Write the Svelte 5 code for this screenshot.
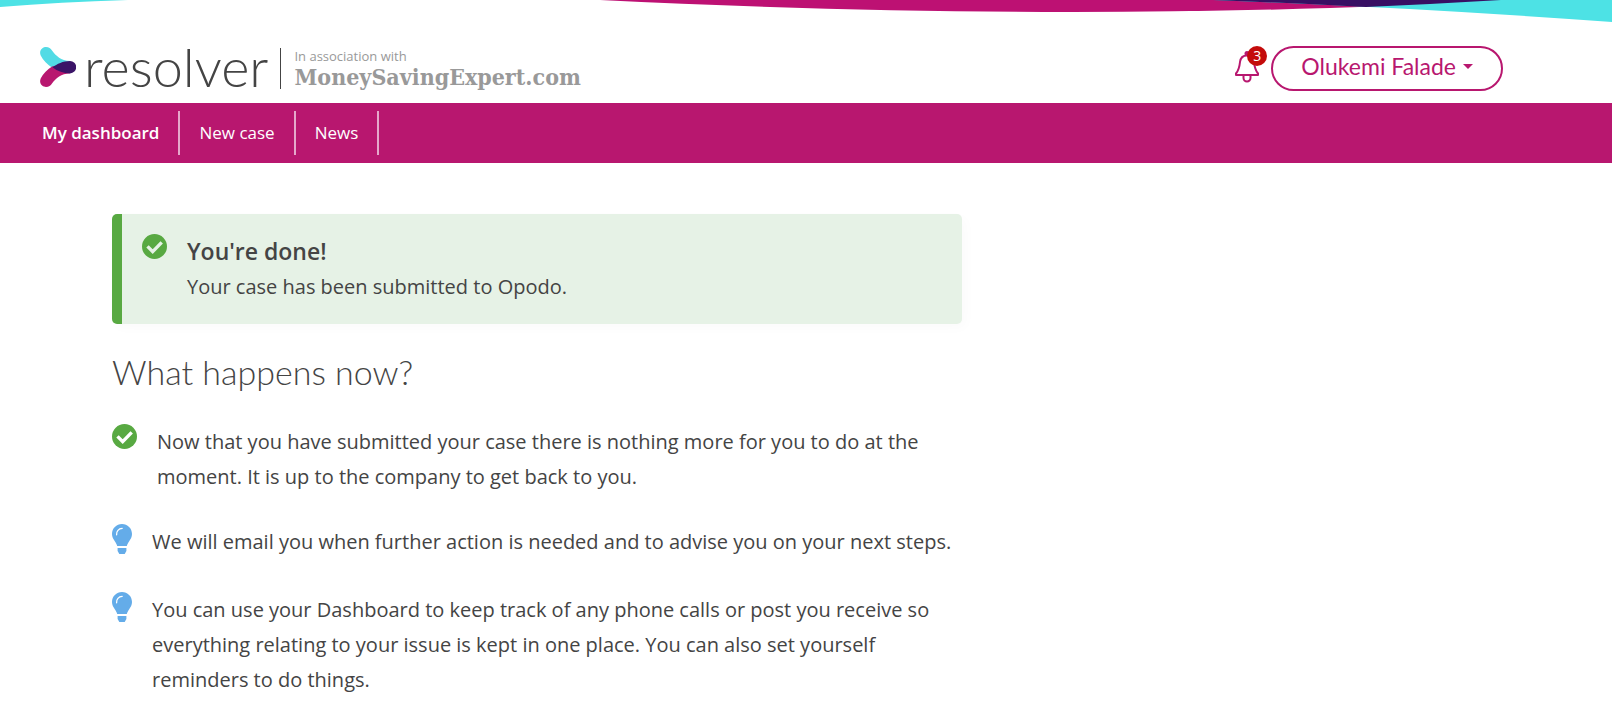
<script lang="ts">
  const links = [
    { label: "My dashboard", href: "#dashboard", active: true },
    { label: "New case", href: "#new-case", active: false },
    { label: "News", href: "#news", active: false },
  ];

  const steps = [
    {
      icon: "check",
      text: "Now that you have submitted your case there is nothing more for you to do at the moment. It is up to the company to get back to you.",
    },
    {
      icon: "bulb",
      text: "We will email you when further action is needed and to advise you on your next steps.",
    },
    {
      icon: "bulb",
      text: "You can use your Dashboard to keep track of any phone calls or post you receive so everything relating to your issue is kept in one place. You can also set yourself reminders to do things.",
    },
  ];

  let user = "Olukemi Falade";
  let notifications = 3;
</script>

{#snippet check()}
  <svg class="check" viewBox="0 0 25 25" aria-hidden="true">
    <circle cx="12.5" cy="12.5" r="12.5" fill="#58a942" />
    <path d="M5.5 12.4l5.2 5.2 9-9.2" fill="none" stroke="currentColor" stroke-width="3.4" />
  </svg>
{/snippet}

{#snippet bulb()}
  <svg class="bulb" viewBox="0 0 20 30" aria-hidden="true">
    <path
      d="M10 0C4.4 0 0 4.4 0 10c0 3 1.3 5 2.8 7.2C4 19 4.7 20.2 5.2 22h9.6c.5-1.8 1.2-3 2.4-4.8C18.7 15 20 13 20 10 20 4.4 15.6 0 10 0z"
      fill="#64ace9"
    />
    <path d="M5.6 24h8.8v3L12.7 30H7.3l-1.7-3z" fill="#64ace9" />
    <path
      d="M4.6 10.8C4.3 7.2 6.6 4.6 10.2 4.4"
      fill="none"
      stroke="#fff"
      stroke-width="1.3"
      stroke-linecap="round"
    />
  </svg>
{/snippet}

<div class="page">
  <svg class="swoosh" viewBox="0 0 1612 24" preserveAspectRatio="none" aria-hidden="true">
    <path d="M0 0H128Q60 2 0 7z" fill="#4de2e5" />
    <path d="M600 0C760 8 920 12 1072 12S1370 8 1501 0z" fill="#bd1173" />
    <path d="M1213 0H1612V22Q1420 8 1213 0z" fill="#4de2e5" />
    <path d="M1213 0H1501Q1435 4 1366 7Q1290 3 1213 0z" fill="#380f63" />
  </svg>

  <header>
    <a class="brand" href="#home">
      <svg class="mark" viewBox="0 0 36 40" aria-hidden="true">
        <path d="M.7 8.500C-1.500 3 3 0 6 0c3 0 4.500 1.500 6 3.500C16 9 21 13.500 30 14v6.500L12.500 21C7.500 17.500 3 13.500.7 8.500z" fill="#52dbe5" />
        <path d="M.7 31.500C-1.500 37 3 40 6 40c3 0 4.500-1.500 6-3.500 4-5.500 9-9.500 18-10.200V20l-17.500-.7C7.500 22.500 3 26.500.7 31.500z" fill="#b8176f" />
        <path d="M12.500 20.300C17 17 23 14 30 14a6.200 6.200 0 0 1 0 12.400c-6.500 0-12.500-2-17.500-6.100z" fill="#3b1467" />
      </svg>
      <span class="name">resolver</span>
    </a>
    <div class="partner">
      <span class="assoc">In association with</span>
      <span class="mse">MoneySavingExpert.com</span>
    </div>

    <div class="account">
      <button class="bell" aria-label="Notifications">
        <svg viewBox="0 0 24 32" aria-hidden="true">
          <g fill="none" stroke="#b8176f" stroke-width="2">
            <path d="M12 4.500C7.500 4.500 5.500 7 5 11c-.5 5-1.500 8.500-4 11.500V24h22v-1.500c-2.500-3-3.500-6.500-4-11.500-.5-4-2.500-6.500-7-6.500z" stroke-linejoin="round" />
            <path d="M8.500 24v3a3.500 3.500 0 0 0 7 0v-3" />
          </g>
          <circle cx="12" cy="2.500" r="2.500" fill="#b8176f" />
        </svg>
        <span class="badge">{notifications}</span>
      </button>
      <button class="user">{user}<span class="caret"></span></button>
    </div>
  </header>

  <nav>
    {#each links as link}
      <a href={link.href} class:active={link.active}>{link.label}</a>
    {/each}
  </nav>

  <main>
    <section class="alert">
      {@render check()}
      <div>
        <strong>You're done!</strong>
        <p>Your case has been submitted to Opodo.</p>
      </div>
    </section>

    <h1>What happens now?</h1>

    <ul>
      {#each steps as step}
        <li>
          {#if step.icon === "check"}
            {@render check()}
          {:else}
            {@render bulb()}
          {/if}
          <p>{step.text}</p>
        </li>
      {/each}
    </ul>
  </main>
</div>

<style>
  :global(body) {
    background: #fff;
  }

  .page {
    --magenta: #b8176f;
    --text: #444;

    position: relative;
    color: var(--text);
    font-family: "Open Sans", "Noto Sans", sans-serif;
    font-size: 20px;
    line-height: 35px;
  }

  p,
  h1,
  ul {
    margin: 0;
    padding: 0;
  }

  a {
    color: inherit;
    text-decoration: none;
  }

  button {
    background: none;
    border: none;
    padding: 0;
    cursor: pointer;
  }

  .swoosh {
    position: absolute;
    top: 0;
    left: 0;
    width: 100%;
    height: 24px;
  }

  header {
    display: flex;
    align-items: center;
    box-sizing: border-box;
    min-height: 103px;
    padding: 34px 109px 0 40px;
  }

  .brand {
    display: flex;
    align-items: center;
    gap: 8px;
    margin-bottom: 4px;
  }

  .mark {
    width: 36px;
    height: 40px;
  }

  .name {
    font-family: Lato, sans-serif;
    font-size: 54px;
    font-weight: 300;
    line-height: 40px;
  }

  .partner {
    display: flex;
    flex-direction: column;
    margin-left: 12px;
    padding-left: 13px;
    border-left: 1px solid var(--text);
    color: #999;
  }

  .assoc {
    font-size: 13px;
    line-height: 16px;
  }

  .mse {
    font-family: "DejaVu Serif Condensed", "DejaVu Serif", serif;
    font-size: 23px;
    font-weight: 700;
    line-height: 25px;
  }

  .account {
    display: flex;
    align-items: center;
    gap: 12px;
    margin-left: auto;
  }

  .bell {
    position: relative;
    width: 24px;
    height: 32px;
    margin-bottom: 4px;
  }

  .bell svg {
    display: block;
    width: 24px;
    height: 32px;
  }

  .badge {
    position: absolute;
    top: -5px;
    left: 12px;
    width: 20px;
    border-radius: 50%;
    background: #c40b0b;
    color: #fff;
    font-family: "Open Sans", sans-serif;
    font-size: 14px;
    line-height: 20px;
    text-align: center;
  }

  .user {
    display: flex;
    align-items: center;
    gap: 7px;
    padding: 0 28px 4px;
    border: 2px solid var(--magenta);
    border-radius: 23px;
    color: var(--magenta);
    font-family: Lato, sans-serif;
    font-size: 23px;
    line-height: 37px;
  }

  .caret {
    border: 5px solid transparent;
    border-top-color: var(--magenta);
    border-bottom: 0;
  }

  nav {
    display: flex;
    padding: 8px 23px;
    background: var(--magenta);
    color: #fff;
    font-size: 17px;
    line-height: 44px;
  }

  nav a {
    padding: 0 19px;
    border-right: 2px solid #e5a8cb;
  }

  nav .active {
    font-weight: 600;
  }

  main {
    max-width: 850px;
    padding: 51px 112px 24px;
  }

  .alert {
    display: flex;
    gap: 20px;
    padding: 20px;
    border-left: 10px solid #58a942;
    border-radius: 5px;
    background: #e6f2e6;
    box-shadow: 4px 4px 12px rgba(0, 0, 0, 0.02);
    color: var(--text);
  }

  .alert .check {
    color: #e6f2e6;
  }

  .alert strong {
    display: block;
    font-size: 23px;
    font-weight: 600;
  }

  h1 {
    margin: 28px 0 32px;
    font-family: Lato, sans-serif;
    font-size: 34px;
    font-weight: 300;
    line-height: 40px;
  }

  ul {
    display: grid;
    gap: 30px;
    list-style: none;
  }

  li {
    display: flex;
    gap: 20px;
    min-height: 38px;
  }

  .check {
    flex: none;
    width: 25px;
    height: 25px;
    color: #fff;
  }

  .bulb {
    flex: none;
    width: 20px;
    height: 30px;
  }
</style>
